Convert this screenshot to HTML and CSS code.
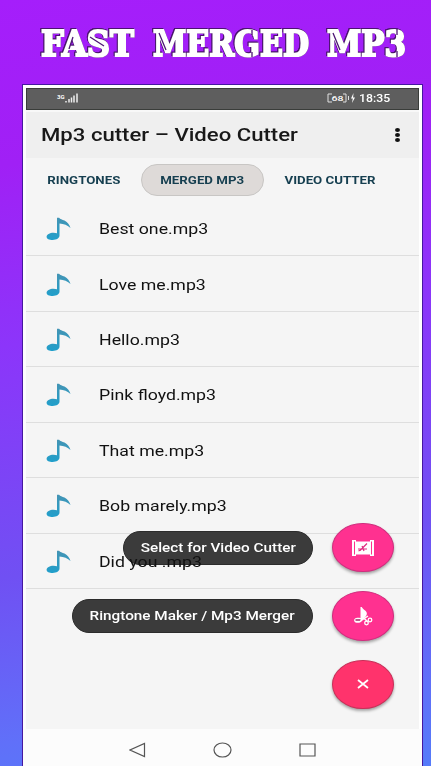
FILE: index.html
```html
<!DOCTYPE html>
<html lang="en">
<head>
<meta charset="utf-8">
<title>Fast Merged MP3</title>
<link rel="stylesheet" href="styles.css">
</head>
<body>
<svg class="defs" width="0" height="0" aria-hidden="true">
  <linearGradient id="noteFill" x1="0" y1="0" x2="0" y2="1"><stop offset="0" stop-color="#4494b4"/><stop offset="1" stop-color="#209fcb"/></linearGradient>
  <symbol id="note" viewBox="0 0 25 24">
    <path fill="url(#noteFill)" d="M11 .8h2.100c1 1.600 3.100 1.700 5.400 2.800 3.300 1.500 5 4.500 6 7.500-2.800-2.700-6.700-4.400-11-4.600V18.600c0 2.500-2.900 4.400-6.800 4.400-3.500 0-6.100-1.200-6.100-3.300 0-2.300 3.200-4 6.800-4 1.500 0 2.700.2 3.600.6z"/>
  </symbol>
</svg>
<main class="poster">
  <h1 class="headline">
    <svg width="373" height="52" viewBox="0 -10 373 52">
      <g class="headline-text">
        <text x="3" y="31" textLength="93" lengthAdjust="spacingAndGlyphs">FAST</text>
        <text x="115" y="31" textLength="156" lengthAdjust="spacingAndGlyphs">MERGED</text>
        <text x="289" y="31" textLength="79" lengthAdjust="spacingAndGlyphs">MP3</text>
      </g>
      <path class="stencil" d="M35 12l-4 12M52 12l14 9M121 8l7 17M214 5v5M214 27v5M295 8l7 17M359 4v6M359 26v6"/>
    </svg>
  </h1>
  <section class="phone">
    <header class="status">
      <div class="signal">
        <small>3G</small>
        <svg width="13" height="10" viewBox="0 0 13 10"><path d="M1 9.500V8M4 9.500V6M6.500 9.500V4.500M9 9.500V2.500M12 9.500V.5" stroke="#eee" stroke-width="1.500"/></svg>
      </div>
      <div class="power">
        <svg width="30" height="10" viewBox="0 0 30 10"><path d="M5 1H1V9H5M16 1H19V9H16M21.500 3v4" fill="none" stroke="#e0e0e0"/><text class="charge" x="4.500" y="8.200" textLength="12" lengthAdjust="spacingAndGlyphs">68</text><path d="M26.500 0 24 5.500h1.800L25 10l3-5.500h-1.900z" fill="#fff"/></svg>
        <span class="clock">18:35</span>
      </div>
    </header>
    <div class="appbar">
      <h2 class="wide">Mp3 cutter – Video Cutter</h2>
      <div class="more"><i></i><i></i><i></i></div>
    </div>
    <nav class="tabs">
      <div class="tab first"><span>RINGTONES</span></div>
      <div class="tab active"><span>MERGED MP3</span></div>
      <div class="tab last"><span>VIDEO CUTTER</span></div>
    </nav>
    <ul class="songs">
      <li><svg class="note"><use href="#note"/></svg><span class="wide">Best one.mp3</span></li>
      <li><svg class="note"><use href="#note"/></svg><span class="wide">Love me.mp3</span></li>
      <li><svg class="note"><use href="#note"/></svg><span class="wide">Hello.mp3</span></li>
      <li><svg class="note"><use href="#note"/></svg><span class="wide">Pink floyd.mp3</span></li>
      <li><svg class="note"><use href="#note"/></svg><span class="wide">That me.mp3</span></li>
      <li><svg class="note"><use href="#note"/></svg><span class="wide">Bob marely.mp3</span></li>
      <li><svg class="note"><use href="#note"/></svg><span class="wide over">Did you .mp3</span></li>
    </ul>
    <div class="dial">
      <div class="action">
        <div class="label video"><span>Select for Video Cutter</span></div>
        <div class="fab">
          <svg width="24" height="18" viewBox="0 0 24 18"><path fill="#fff" d="M1 1h4v1.500h14V1h4v16h-4v-1.500H5V17H1z"/><path d="M3.500 2.500v13M20.500 2.500v13" stroke="#ff2f8e"/><path d="M7 10h9M9 11.500l7-7M11 7l2 5M7.500 12l2-1" stroke="#e02c80" stroke-width="1.200"/></svg>
        </div>
      </div>
      <div class="action">
        <div class="label ringtone"><span>Ringtone Maker / Mp3 Merger</span></div>
        <div class="fab">
          <svg width="20" height="20" viewBox="0 0 20 20"><path fill="#fff" d="M7.500 1h1.300c.8 2.500 4.500 3.200 5 6 .2 1.500-.4 2.500-1.100 3.500L9 14.500c-.5 2-3 2.500-5.500 2.200C1 16.300.5 14 1.800 12.700c1.300-1.200 3.500-1.200 5.700-.7z"/><path d="M2.500 14h5" stroke="#a02464" stroke-width="1.500"/><path d="m7.500 15 7.500-5M9 10.500l6 5.500" stroke="#fff" stroke-width="1.500"/><circle cx="17" cy="14" r="1.800" fill="none" stroke="#fff" stroke-width="1.300"/><circle cx="13.500" cy="17" r="1.800" fill="none" stroke="#fff" stroke-width="1.300"/></svg>
        </div>
      </div>
      <div class="action">
        <div class="fab close"><svg width="12" height="10" viewBox="0 0 12 10"><path d="m1 1 10 8M11 1 1 9" stroke="#fff" stroke-width="1.800"/></svg></div>
      </div>
    </div>
    <footer class="keys">
      <svg width="17" height="16" viewBox="0 0 17 16"><path d="M15.500 1.500v13L1 8z"/></svg>
      <svg width="19" height="16" viewBox="0 0 19 16"><ellipse cx="9.500" cy="8" rx="8.500" ry="7"/></svg>
      <svg width="17" height="14" viewBox="0 0 17 14"><path d="M1 1h15v12H1z"/></svg>
    </footer>
  </section>
</main>
</body>
</html>
```
FILE: styles.css
```css
:root { --stretch: 1.265; }
* { box-sizing: border-box; }
body { margin: 0; font-family: Roboto, "Liberation Sans", sans-serif; }
.defs { display: block; height: 0; }
.poster {
  width: 431px; height: 766px; padding: 0 9px 0 23px; overflow: hidden;
  display: flex; flex-direction: column;
  background: linear-gradient(172deg, #a51efb 0%, #a020f5 20%, #8c35fa 42%, #7050f3 70%, #6070f9 90%, #557bf9 100%);
}
.headline { margin: 0 0 0 15px; height: 85px; padding-top: 14.500px; }
.headline svg { display: block; overflow: visible; }
.headline-text {
  font: bold 35px "DejaVu Serif", serif; fill: #fff;
  stroke: #fff; stroke-width: 2.200px;
  filter: drop-shadow(.7px .7px 0 #35104f) drop-shadow(-.6px -.6px 0 #4b1470);
}
.stencil { fill: none; stroke: #4d1675; stroke-width: 1.300; }
.phone {
  position: relative; flex: 1; display: flex; flex-direction: column;
  padding: 3px 3px 0; background: #f5f5f5;
  box-shadow: inset 0 3px #fff, inset 3px 0 #fdfdfd, inset -3px 0 #fff, 0 0 0 1px #4618a0;
}
.status {
  height: 22px; display: flex; justify-content: space-between; align-items: center;
  padding: 0 28px 2px 30px; background: #5e5e5e; border: 1px solid #3a3d3a; color: #fff;
}
.signal, .power { display: flex; align-items: center; }
.signal small { font-size: 6px; font-weight: 700; line-height: 8px; align-self: flex-start; }
.charge { font: 500 8px Roboto, sans-serif; fill: #fff; }
.clock { display: block; width: 31px; margin-left: 2px; font-size: 10.500px; font-weight: 500; transform: scaleX(1.17); transform-origin: left; white-space: nowrap; }
.appbar {
  height: 48px; display: flex; align-items: center; justify-content: space-between;
  padding: 0 19px 0 15px; background: #efefef; border-top: 2px solid #f8f8f8;
}
.wide { display: block; transform: scaleX(var(--stretch)); transform-origin: left; white-space: nowrap; }
.appbar h2 { margin: 0; font-size: 17.500px; font-weight: 500; color: #181818; }
.more { display: flex; flex-direction: column; gap: 1px; }
.more i { width: 5px; height: 4px; border-radius: 50%; background: #111; }
.tabs { height: 43px; display: flex; align-items: center; color: #163f50; }
.tab { height: 32px; padding-top: 2px; display: flex; align-items: center; justify-content: center; font-size: 10.500px; font-weight: 700; }
.tab span { white-space: nowrap; transform: scaleX(var(--stretch)); }
.first { width: 115px; }
.active { width: 123px; margin-right: 1px; border: 1px solid #c8c6c4; border-radius: 16px; background: #dedad8; }
.last { width: 131px; }
.songs { margin: 0; padding: 0; list-style: none; }
.songs li { height: 55.430px; display: flex; align-items: center; padding: 2px 0 0 20px; border-bottom: 1px solid #dedede; font-size: 14px; color: #111; }
.note { width: 25px; height: 24px; margin-right: 28px; flex: none; }
.over { position: relative; z-index: 2; }
.dial { position: absolute; right: 28px; bottom: 57px; display: flex; flex-direction: column; align-items: flex-end; gap: 19px; }
.action { display: flex; align-items: center; gap: 19px; }
.label { height: 34px; padding-top: 1px; border-radius: 17px; background: #3b3b3b; border: 1px solid #2c2c2c; display: flex; align-items: center; justify-content: center; color: #fff; font-size: 12.100px; font-weight: 500; }
.label span { white-space: nowrap; transform: scaleX(var(--stretch)); }
.video { width: 190px; }
.ringtone { width: 241px; }
.fab { width: 62px; height: 49.400px; border-radius: 50%; display: flex; align-items: center; justify-content: center; background: #ff3190; border: 1px solid #d02e7e; box-shadow: 0 2px 3px #0005; }
.fab.close { background: #ff336c; border-color: #c93059; }
.keys { margin: auto -3px 0; height: 37px; display: flex; align-items: center; justify-content: center; gap: 67px; background: #fcfcfc; padding-top: 4px; }
.keys svg { fill: none; stroke: #555; stroke-width: 1.200; }
```
